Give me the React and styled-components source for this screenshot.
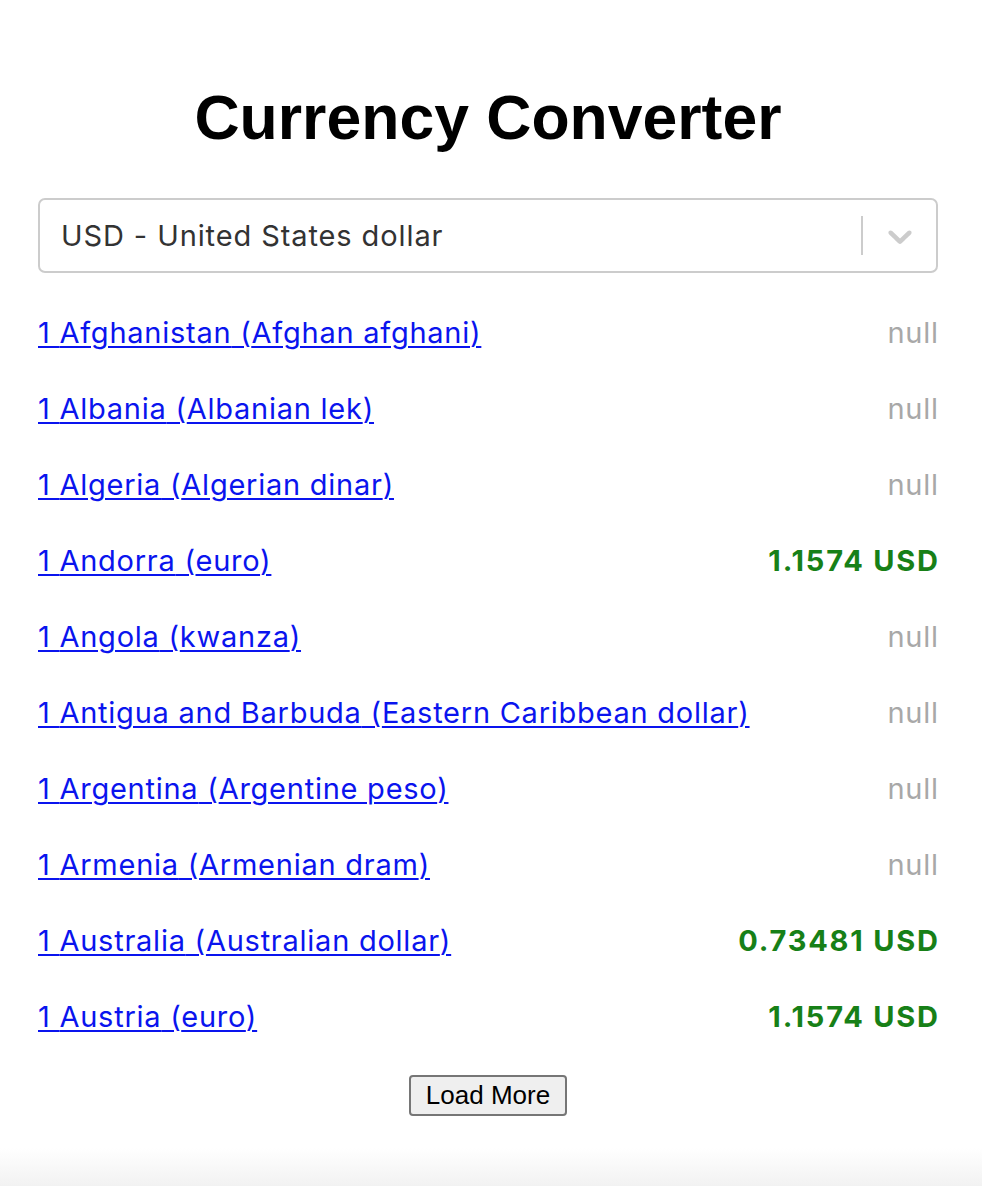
import React from "react";
import styled, { createGlobalStyle } from "styled-components";

const GlobalStyle = createGlobalStyle`
  html, body {
    margin: 0;
    padding: 0;
  }
  body {
    min-height: 1186px;
    background: linear-gradient(to bottom, #ffffff 0, #ffffff 1148px, #f2f2f2 1186px);
    font-family: Inter, "Noto Sans", sans-serif;
  }
`;

const rates = [
  { country: "Afghanistan", currency: "Afghan afghani", value: null },
  { country: "Albania", currency: "Albanian lek", value: null },
  { country: "Algeria", currency: "Algerian dinar", value: null },
  { country: "Andorra", currency: "euro", value: "1.1574" },
  { country: "Angola", currency: "kwanza", value: null },
  { country: "Antigua and Barbuda", currency: "Eastern Caribbean dollar", value: null },
  { country: "Argentina", currency: "Argentine peso", value: null },
  { country: "Armenia", currency: "Armenian dram", value: null },
  { country: "Australia", currency: "Australian dollar", value: "0.73481" },
  { country: "Austria", currency: "euro", value: "1.1574" },
];

const App = () => {
  return (
    <>
      <GlobalStyle />
      <Page>
        <Title>Currency Converter</Title>
        <Select>
          <SelectValue>USD - United States dollar</SelectValue>
          <Indicators>
            <Separator />
            <Chevron viewBox="0 0 20 20" aria-hidden="true">
              <path d="M4.516 7.548c0.436-0.446 1.043-0.481 1.576 0l3.908 3.747 3.908-3.747c0.533-0.481 1.141-0.446 1.574 0 0.436 0.445 0.408 1.197 0 1.615-0.406 0.418-4.695 4.502-4.695 4.502-0.217 0.223-0.502 0.335-0.787 0.335s-0.57-0.112-0.789-0.335c0 0-4.287-4.084-4.695-4.502s-0.436-1.17 0-1.615z" />
            </Chevron>
          </Indicators>
        </Select>
        <RateList>
          {rates.map((rate) => (
            <RateRow key={rate.country}>
              <RateLink href="#">
                1 {rate.country} ({rate.currency})
              </RateLink>
              <RateValue $found={!!rate.value}>
                {rate.value ? `${rate.value} USD` : "null"}
              </RateValue>
            </RateRow>
          ))}
        </RateList>
        <Footer>
          <LoadButton type="button">Load More</LoadButton>
        </Footer>
      </Page>
    </>
  );
};

const Page = styled.main`
  width: 900px;
  margin: 0 44px 0 38px;
  padding-top: 81px;
`;

const Title = styled.h1`
  margin: 0 0 45px;
  text-align: center;
  font-family: "Liberation Sans", Arial, sans-serif;
  font-weight: 700;
  font-size: 62.5px;
  line-height: 72px;
  color: #000;
`;

const Select = styled.div`
  box-sizing: border-box;
  height: 75px;
  display: flex;
  align-items: center;
  border: 2px solid #cccccc;
  border-radius: 7px;
  background: #fff;
`;

const SelectValue = styled.div`
  flex: 1;
  padding-left: 21px;
  font-size: 29px;
  letter-spacing: 0.9px;
  color: #333333;
`;

const Indicators = styled.div`
  display: flex;
  align-items: center;
  height: 100%;
`;

const Separator = styled.span`
  width: 2px;
  height: 39px;
  background: #cccccc;
`;

const Chevron = styled.svg`
  width: 40px;
  height: 40px;
  margin: 0 16px 0 17px;
  fill: #cccccc;
`;

const RateList = styled.ul`
  list-style: none;
  margin: 21px 0 0;
  padding: 0;
`;

const RateRow = styled.li`
  height: 76px;
  display: flex;
  align-items: center;
  justify-content: space-between;
  font-size: 29px;
`;

const RateLink = styled.a`
  color: #0a14ee;
  letter-spacing: 0.75px;
  text-decoration: underline;
  text-decoration-thickness: 2px;
  text-underline-offset: 3px;
`;

const RateValue = styled.span`
  color: ${(p) => (p.$found ? "#178017" : "#a8a8a8")};
  font-weight: ${(p) => (p.$found ? 700 : 400)};
  letter-spacing: ${(p) => (p.$found ? "1.8px" : "0.75px")};
  margin-right: ${(p) => (p.$found ? "-1.8px" : "-0.75px")};
`;

const Footer = styled.div`
  display: flex;
  justify-content: center;
  padding-top: 21px;
`;

const LoadButton = styled.button`
  height: 41px;
  padding: 0 15px;
  font-family: "Liberation Sans", Arial, sans-serif;
  font-size: 26px;
  color: #000;
  background: #efefef;
  border: 2px solid #767676;
  border-radius: 4px;
`;

export default App;
